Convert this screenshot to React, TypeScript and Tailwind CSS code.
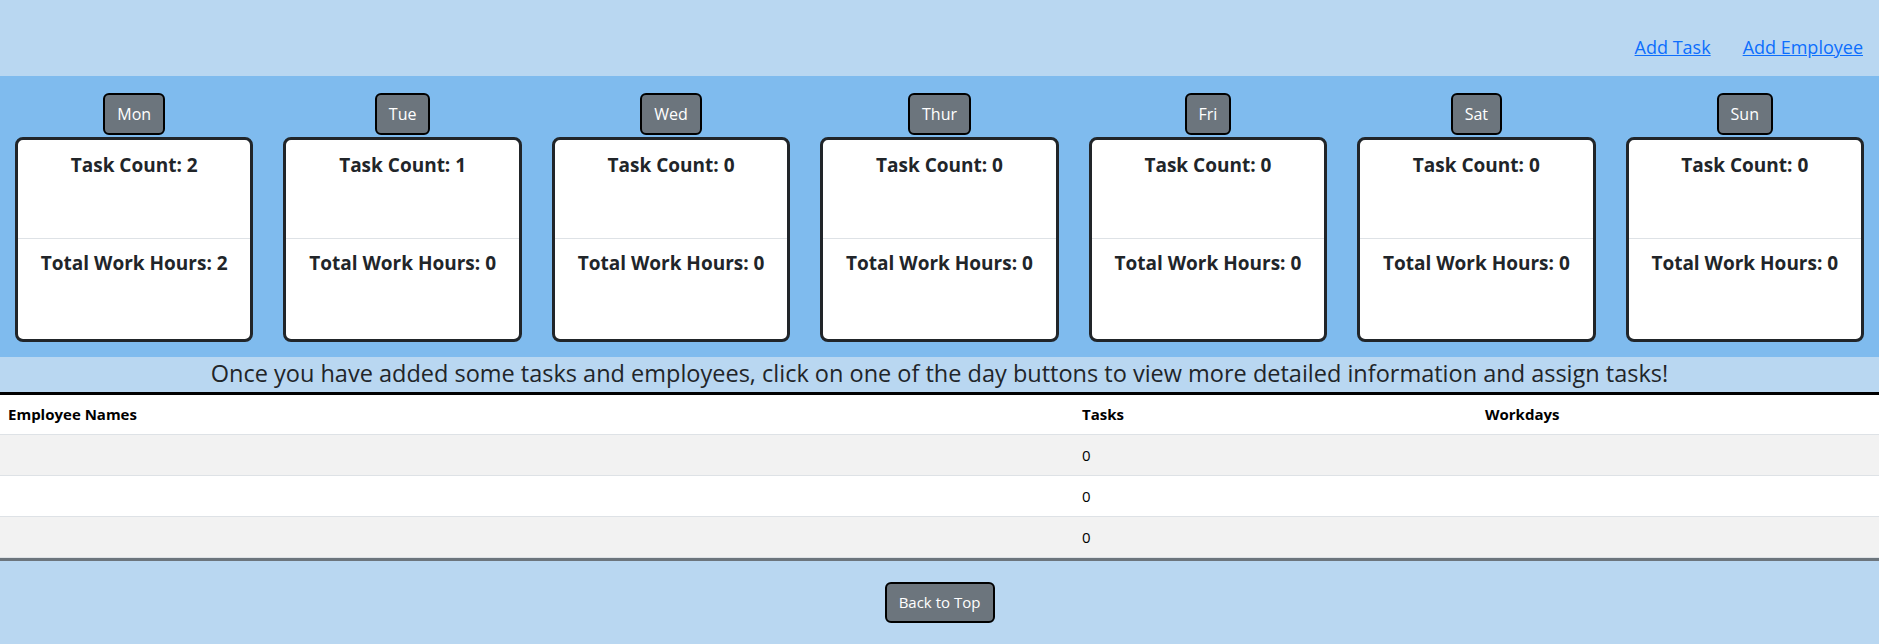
import React from "react";

const days = [
  { d: "Mon", c: 2, h: 2 },
  { d: "Tue", c: 1, h: 0 },
  { d: "Wed", c: 0, h: 0 },
  { d: "Thur", c: 0, h: 0 },
  { d: "Fri", c: 0, h: 0 },
  { d: "Sat", c: 0, h: 0 },
  { d: "Sun", c: 0, h: 0 },
];

export default function App() {
  return (
    <div className="w-full min-h-[644px] bg-[#b9d7f1] font-['Open_Sans',sans-serif] text-[#212529]">
      <header className="h-[76px] flex justify-end items-center gap-[32px] pr-[16px] pt-[18px]">
        <a href="#" className="text-[18px] text-[#0d6efd] underline leading-none">Add Task</a>
        <a href="#" className="text-[18px] text-[#0d6efd] underline leading-none">Add Employee</a>
      </header>

      <section className="bg-[#7fbbee] h-[281px] grid grid-cols-7 pt-[17px]">
        {days.map((x) => (
          <div key={x.d} className="flex flex-col items-center px-[15px]">
            <button className="h-[42px] px-[12px] bg-[#6c757d] text-white text-[16px] border-2 border-black rounded-md">
              {x.d}
            </button>
            <div className="mt-[2px] w-full h-[205px] bg-white border-[3px] border-[#212529] rounded-lg flex flex-col">
              <div className="h-[99px] border-b border-[#dee2e6] pt-[12px] text-center">
                <h5 className="text-[19px] font-bold leading-[26px]">Task Count: {x.c}</h5>
              </div>
              <div className="flex-1 pt-[11px] text-center">
                <h5 className="text-[19px] font-bold leading-[26px]">Total Work Hours: {x.h}</h5>
              </div>
            </div>
          </div>
        ))}
      </section>

      <p className="h-[35px] pt-[1px] text-center text-[23.5px] leading-[30px] whitespace-nowrap">
        Once you have added some tasks and employees, click on one of the day buttons to view more detailed information and assign tasks!
      </p>

      <div className="border-t-[3px] border-black bg-white text-black text-[15px]">
        <div className="grid grid-cols-[1074px_403px_1fr] h-[40px] items-center border-b border-[#dee2e6] font-bold">
          <div className="px-[8px]">Employee Names</div>
          <div className="px-[8px]">Tasks</div>
          <div className="px-[8px]">Workdays</div>
        </div>
        {[0, 1, 2].map((i) => (
          <div
            key={i}
            className={
              "grid grid-cols-[1074px_403px_1fr] h-[41px] items-center border-b border-[#dee2e6] " +
              (i % 2 === 0 ? "bg-[#f2f2f2]" : "bg-white")
            }
          >
            <div className="px-[8px]"></div>
            <div className="px-[8px]">0</div>
            <div className="px-[8px]"></div>
          </div>
        ))}
      </div>

      <footer className="border-t-[3px] border-[#6c757d] h-[85px] flex justify-center items-center">
        <button className="h-[41px] w-[110px] bg-[#6c757d] text-white text-[15px] border-2 border-black rounded-md">
          Back to Top
        </button>
      </footer>
    </div>
  );
}
